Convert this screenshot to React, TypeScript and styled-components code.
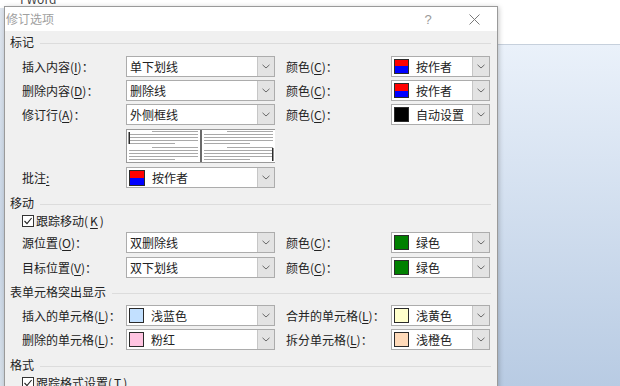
import React from "react";
import styled, { createGlobalStyle } from "styled-components";

const GlobalStyle = createGlobalStyle`
  html, body {
    margin: 0;
    padding: 0;
  }
  body {
    font-family: "Noto Sans CJK SC", "Microsoft YaHei", sans-serif;
    font-size: 12px;
    color: #222222;
  }
  u {
    text-underline-offset: 2px;
  }
`;

const Desktop = styled.div`
  position: relative;
  width: 620px;
  height: 386px;
  overflow: hidden;
  background: linear-gradient(
    to bottom,
    #ffffff 0,
    #ffffff 44px,
    #c6d0dc 44px,
    #c6d0dc 45px,
    #eaf1fa 45px,
    #b8cbe3 100%
  );
`;

const WordEdge = styled.div`
  position: absolute;
  left: 0;
  top: 8px;
  width: 5px;
  height: 380px;
  background: linear-gradient(to bottom, #dfe6ef, #c9d6e6 60%, #d7e0ea);
`;

const WordTitle = styled.div`
  position: absolute;
  left: 20px;
  top: -10px;
  font-size: 12px;
  color: #444;
`;

const Dialog = styled.div`
  position: absolute;
  left: 4px;
  top: 6px;
  width: 494px;
  height: 400px;
  box-sizing: border-box;
  border: 1px solid #9a9a9a;
  background: #f0f0f0;
  box-shadow: 1px 1px 5px rgba(0, 0, 0, 0.22);
  display: flex;
  flex-direction: column;
`;

const TitleBar = styled.div`
  height: 24px;
  background: #ffffff;
  display: flex;
  align-items: center;
`;

const TitleText = styled.div`
  flex: 1;
  padding-left: 1px;
  color: #a0a0a0;
  line-height: 16px;
`;

const TitleButton = styled.div`
  width: 46px;
  height: 24px;
  display: flex;
  align-items: center;
  justify-content: center;
  color: #9a9a9a;
  font-family: "Liberation Sans", sans-serif;
  font-size: 13px;
`;

const Body = styled.div`
  padding: 3px 6px 0 5px;
  display: flex;
  flex-direction: column;
`;

const SectionHeader = styled.div<{ $mt?: number }>`
  display: flex;
  align-items: center;
  gap: 6px;
  height: 16px;
  line-height: 16px;
  margin-top: ${(p) => p.$mt ?? 0}px;

  &::after {
    content: "";
    flex: 1;
    height: 1px;
    margin-top: 2px;
    background: #dcdcdc;
  }
`;

const Row = styled.div<{ $mt?: number; $h?: number }>`
  display: grid;
  grid-template-columns: 104px 149px 11px 105px 99px;
  align-items: center;
  margin-left: 12px;
  height: ${(p) => p.$h ?? 21}px;
  margin-top: ${(p) => p.$mt ?? 0}px;
`;

const Label = styled.div<{ $col?: number }>`
  grid-column: ${(p) => p.$col ?? 1};
  white-space: nowrap;
  line-height: 16px;
  padding-top: 1px;
`;

const ComboBox = styled.div<{ $col?: number }>`
  grid-column: ${(p) => p.$col ?? 2};
  height: 21px;
  box-sizing: border-box;
  border: 1px solid #acacac;
  background: #ffffff;
  display: flex;
`;

const ComboValue = styled.div<{ $swatch?: boolean }>`
  flex: 1;
  display: flex;
  align-items: center;
  gap: 7px;
  padding-left: ${(p) => (p.$swatch ? 2 : 3)}px;
  line-height: 16px;
  white-space: nowrap;
`;

const DropButton = styled.div`
  width: 16px;
  background: #e3e3e3;
  border-left: 1px solid #c6c6c6;
  display: flex;
  align-items: center;
  justify-content: center;
`;

const Swatch = styled.span<{ $fill: string; $size?: number }>`
  width: ${(p) => p.$size ?? 15}px;
  height: ${(p) => p.$size ?? 15}px;
  box-sizing: border-box;
  border: 1px solid #2a2a2a;
  background: ${(p) => p.$fill};
  flex-shrink: 0;
`;

const Preview = styled.div`
  grid-column: 2;
  height: 34px;
`;

const CheckRow = styled.label<{ $mt?: number }>`
  display: flex;
  align-items: center;
  gap: 2px;
  margin-left: 12px;
  height: 16px;
  line-height: 16px;
  margin-top: ${(p) => p.$mt ?? 0}px;
`;

const CheckBox = styled.span`
  width: 12px;
  height: 12px;
  box-sizing: border-box;
  border: 1px solid #333333;
  background: #ffffff;
  display: flex;
  align-items: center;
  justify-content: center;
`;

const BY_AUTHOR = "linear-gradient(to bottom, #ff0000 50%, #0000ff 50%)";

const Chevron = () => (
  <svg width="8" height="5" viewBox="0 0 8 5">
    <path d="M0.5 0.8 L4 4 L7.5 0.8" fill="none" stroke="#6a6a6a" strokeWidth="1" />
  </svg>
);

const Combo = ({
  col,
  text,
  fill,
  size,
}: {
  col?: number;
  text: string;
  fill?: string;
  size?: number;
}) => (
  <ComboBox $col={col}>
    <ComboValue $swatch={!!fill}>
      {fill && <Swatch $fill={fill} $size={size} />}
      {text}
    </ComboValue>
    <DropButton>
      <Chevron />
    </DropButton>
  </ComboBox>
);

const Check = ({ children, mt }: { children: React.ReactNode; mt?: number }) => (
  <CheckRow $mt={mt}>
    <CheckBox>
      <svg width="10" height="10" viewBox="0 0 10 10">
        <path d="M1.5 5 L4 7.6 L8.6 2" fill="none" stroke="#222" strokeWidth="1.1" />
      </svg>
    </CheckBox>
    {children}
  </CheckRow>
);

// little picture of a page with change bars, left margin / right margin
const PreviewPanel = ({ x, bar }: { x: number; bar: "left" | "right" }) => {
  const w = 73;
  const ys = [2, 5, 8, 11, 14, 18, 21, 24, 27, 30];
  return (
    <g>
      <rect x={x} y={1} width={w} height={32} fill="#ffffff" />
      {ys.map((y, i) => {
        const first = i === 0 || i === 5;
        const last = i === 4 || i === 9;
        const x1 = x + (first ? 25 : 2);
        const x2 = x + (last ? 48 : w - 2);
        return <rect key={y} x={x1} y={y} width={x2 - x1} height={1} fill="#a9a9a9" />;
      })}
      {bar === "left" ? (
        <rect x={x + 1.5} y={3} width={1.5} height={12} fill="#2a2a2a" />
      ) : (
        <rect x={x + w - 3} y={19} width={1.5} height={13} fill="#2a2a2a" />
      )}
    </g>
  );
};

const ChangePreview = () => (
  <Preview>
    <svg width="149" height="34" viewBox="0 0 149 34">
      <rect x="0.5" y="0.5" width="148" height="33" fill="#ffffff" stroke="#9a9a9a" />
      <PreviewPanel x={1} bar="left" />
      <rect x="74" y="1" width="2" height="32" fill="#6a6a6a" />
      <PreviewPanel x={76} bar="right" />
    </svg>
  </Preview>
);

const ColorLabel = () => (
  <Label $col={4}>
    颜色(<u>C</u>)：
  </Label>
);

export default function App() {
  return (
    <Desktop>
      <GlobalStyle />
      <WordTitle>f Word</WordTitle>
      <WordEdge />
      <Dialog>
        <TitleBar>
          <TitleText>修订选项</TitleText>
          <TitleButton>?</TitleButton>
          <TitleButton>
            <svg width="11" height="11" viewBox="0 0 11 11">
              <path d="M0.5 0.5 L10.5 10.5 M10.5 0.5 L0.5 10.5" stroke="#7a7a7a" strokeWidth="1" />
            </svg>
          </TitleButton>
        </TitleBar>
        <Body>
          <SectionHeader>标记</SectionHeader>
          <Row $mt={6}>
            <Label>
              插入内容(<u>I</u>)：
            </Label>
            <Combo text="单下划线" />
            <ColorLabel />
            <Combo col={5} text="按作者" fill={BY_AUTHOR} />
          </Row>
          <Row $mt={3}>
            <Label>
              删除内容(<u>D</u>)：
            </Label>
            <Combo text="删除线" />
            <ColorLabel />
            <Combo col={5} text="按作者" fill={BY_AUTHOR} />
          </Row>
          <Row $mt={3}>
            <Label>
              修订行(<u>A</u>)：
            </Label>
            <Combo text="外侧框线" />
            <ColorLabel />
            <Combo col={5} text="自动设置" fill="#000000" />
          </Row>
          <Row $mt={4} $h={34}>
            <ChangePreview />
          </Row>
          <Row $mt={4}>
            <Label>
              批注<u>:</u>
            </Label>
            <Combo text="按作者" fill={BY_AUTHOR} size={16} />
          </Row>

          <SectionHeader $mt={7}>移动</SectionHeader>
          <Check mt={2}>
            跟踪移动(<u>K</u>)
          </Check>
          <Row $mt={3}>
            <Label>
              源位置(<u>O</u>)：
            </Label>
            <Combo text="双删除线" />
            <ColorLabel />
            <Combo col={5} text="绿色" fill="#008000" />
          </Row>
          <Row $mt={4}>
            <Label>
              目标位置(<u>V</u>)：
            </Label>
            <Combo text="双下划线" />
            <ColorLabel />
            <Combo col={5} text="绿色" fill="#008000" />
          </Row>

          <SectionHeader $mt={6}>表单元格突出显示</SectionHeader>
          <Row $mt={5}>
            <Label>
              插入的单元格(<u>L</u>)：
            </Label>
            <Combo text="浅蓝色" fill="#c2e0ff" />
            <Label $col={4}>
              合并的单元格(<u>L</u>)：
            </Label>
            <Combo col={5} text="浅黄色" fill="#ffffcc" />
          </Row>
          <Row $mt={3}>
            <Label>
              删除的单元格(<u>L</u>)：
            </Label>
            <Combo text="粉红" fill="#ffc4e1" />
            <Label $col={4}>
              拆分单元格(<u>L</u>)：
            </Label>
            <Combo col={5} text="浅橙色" fill="#ffdab9" />
          </Row>

          <SectionHeader $mt={7}>格式</SectionHeader>
          <Check mt={2}>
            跟踪格式设置(<u>T</u>)
          </Check>
        </Body>
      </Dialog>
    </Desktop>
  );
}
